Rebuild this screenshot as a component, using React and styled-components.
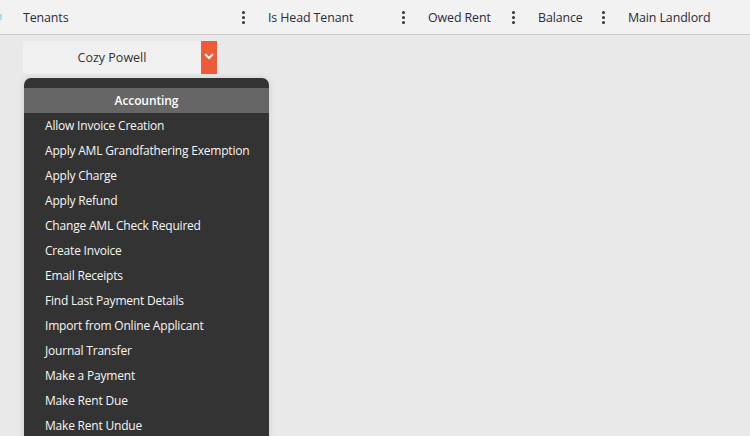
import React from "react";
import styled, { createGlobalStyle } from "styled-components";

const GlobalStyle = createGlobalStyle`
	html, body {
		margin: 0;
		padding: 0;
		background: #e9e9e9;
		font-family: "Segoe UI", "Open Sans", "Noto Sans", sans-serif;
		overflow: hidden;
	}
`;

const Page = styled.div`
	width: 750px;
	height: 436px;
	background: #e9e9e9;
	position: relative;
	overflow: hidden;
`;

const HeaderBar = styled.div`
	height: 34px;
	background: #f2f2f2;
	border-bottom: 1px solid #cfcfcf;
	display: flex;
	align-items: center;
	font-size: 12.4px;
	letter-spacing: -0.1px;
	color: #2b2b3a;
	position: relative;
`;

const EdgeMark = styled.span`
	position: absolute;
	left: 0;
	top: 14px;
	width: 2px;
	height: 6px;
	background: #a9dff0;
`;

const Column = styled.div`
	width: ${(props) => props.width}px;
	padding-left: ${(props) => props.pad}px;
	display: flex;
	align-items: center;
	justify-content: space-between;
	box-sizing: border-box;
`;

const Kebab = styled.span`
	display: flex;
	flex-direction: column;
	gap: 2px;
	margin-right: 9px;

	i {
		width: 3px;
		height: 3px;
		border-radius: 50%;
		background: #333;
	}
`;

const Body = styled.div`
	padding: 6px 0 0 23px;
`;

const Select = styled.div`
	display: flex;
	width: 194px;
	height: 33px;
`;

const SelectValue = styled.div`
	flex: 1;
	background: #f0f0f0;
	border-radius: 3px 0 0 3px;
	display: flex;
	align-items: center;
	justify-content: center;
	font-size: 12.5px;
	color: #333;
`;

const SelectButton = styled.div`
	width: 16px;
	background: #ee5c37;
	display: flex;
	align-items: center;
	justify-content: center;
	padding-bottom: 2px;
	box-sizing: border-box;
`;

const Menu = styled.div`
	margin: 4px 0 0 1px;
	width: 245px;
	min-height: 360px;
	background: #333333;
	border-radius: 7px 7px 0 0;
	padding-top: 10px;
	box-shadow: 0 0 6px rgba(0, 0, 0, 0.12);
`;

const MenuHeader = styled.div`
	height: 25px;
	background: #666666;
	color: #ffffff;
	font-size: 12px;
	font-weight: 600;
	letter-spacing: -0.1px;
	display: flex;
	align-items: center;
	justify-content: center;
`;

const MenuItem = styled.div`
	height: 25px;
	display: flex;
	align-items: center;
	padding-left: 21px;
	font-size: 12px;
	letter-spacing: -0.2px;
	color: #f6f6f6;
	white-space: nowrap;
`;

const columns = [
	{ label: "Tenants", width: 254, pad: 23 },
	{ label: "Is Head Tenant", width: 160, pad: 14 },
	{ label: "Owed Rent", width: 110, pad: 14 },
	{ label: "Balance", width: 90, pad: 14 },
	{ label: "Main Landlord", width: 136, pad: 14, last: true },
];

const items = [
	"Allow Invoice Creation",
	"Apply AML Grandfathering Exemption",
	"Apply Charge",
	"Apply Refund",
	"Change AML Check Required",
	"Create Invoice",
	"Email Receipts",
	"Find Last Payment Details",
	"Import from Online Applicant",
	"Journal Transfer",
	"Make a Payment",
	"Make Rent Due",
	"Make Rent Undue",
];

const App = () => {
	return (
		<Page>
			<GlobalStyle />
			<HeaderBar>
				<EdgeMark />
				{columns.map((col) => (
					<Column key={col.label} width={col.width} pad={col.pad}>
						<span>{col.label}</span>
						{!col.last && (
							<Kebab>
								<i />
								<i />
								<i />
							</Kebab>
						)}
					</Column>
				))}
			</HeaderBar>
			<Body>
				<Select>
					<SelectValue>Cozy Powell</SelectValue>
					<SelectButton>
						<svg width="10" height="7" viewBox="0 0 10 7">
							<path d="M1.2 1.2 L5 5 L8.8 1.2" stroke="#fff" strokeWidth="2" fill="none" />
						</svg>
					</SelectButton>
				</Select>
				<Menu>
					<MenuHeader>Accounting</MenuHeader>
					{items.map((item) => (
						<MenuItem key={item}>{item}</MenuItem>
					))}
				</Menu>
			</Body>
		</Page>
	);
};

export default App;
